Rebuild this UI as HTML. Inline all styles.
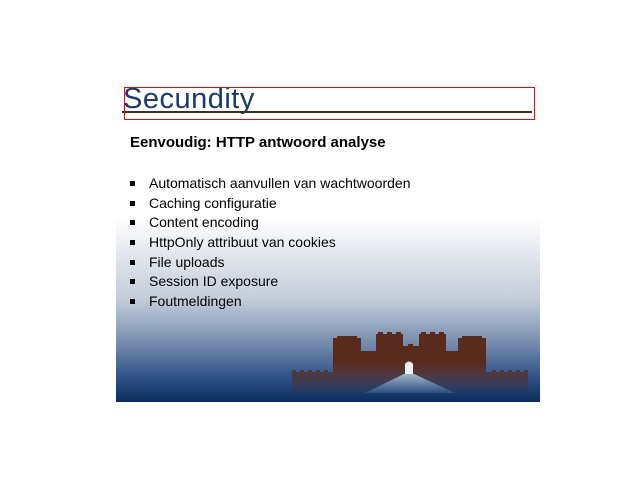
<!DOCTYPE html>
<html><head><style>
body{margin:0;width:640px;height:480px;background:#fff;position:relative;overflow:hidden;font-family:"Liberation Sans",sans-serif}
#slide{position:absolute;left:116px;top:80px;width:424px;height:322px;background:linear-gradient(to bottom,#fff 0,#fff 138px,#e6e9ef 170px,#c3ccd9 220px,#7189ab 265px,#33558a 295px,#0a2d5e 322px)}
.t{position:absolute;color:#000;white-space:nowrap}
.b{position:absolute;left:130px;width:5px;height:5px;background:#000}
</style></head><body>
<div id="slide"></div>
<div class="t" style="left:123px;top:83px;font-size:29px;color:#1b3a6b;letter-spacing:0.5px">Secundity</div>
<div style="position:absolute;left:122px;top:111px;width:410px;height:2px;background:#4a2a1e"></div>
<div style="position:absolute;left:124px;top:87px;width:409px;height:31px;border:1px solid #f00"></div>
<div class="t" style="left:130px;top:134px;font-size:15px;font-weight:bold">Eenvoudig: HTTP antwoord analyse</div>
<div class="b" style="top:181px"></div><div class="t" style="left:149px;top:175px;font-size:14px">Automatisch aanvullen van wachtwoorden</div>
<div class="b" style="top:201px"></div><div class="t" style="left:149px;top:195px;font-size:14px">Caching configuratie</div>
<div class="b" style="top:220px"></div><div class="t" style="left:149px;top:214px;font-size:14px">Content encoding</div>
<div class="b" style="top:240px"></div><div class="t" style="left:149px;top:234px;font-size:14px">HttpOnly attribuut van cookies</div>
<div class="b" style="top:260px"></div><div class="t" style="left:149px;top:254px;font-size:14px">File uploads</div>
<div class="b" style="top:279px"></div><div class="t" style="left:149px;top:273px;font-size:14px">Session ID exposure</div>
<div class="b" style="top:299px"></div><div class="t" style="left:149px;top:293px;font-size:14px">Foutmeldingen</div>
<svg style="position:absolute;left:0;top:0" width="640" height="480">
<defs>
<linearGradient id="mg" gradientUnits="userSpaceOnUse" x1="0" y1="330" x2="0" y2="396"><stop offset="0.5" stop-color="#fff"/><stop offset="1" stop-color="#000"/></linearGradient>
<mask id="m"><rect x="280" y="320" width="260" height="80" fill="url(#mg)"/></mask>
<linearGradient id="r" x1="0" y1="0" x2="0" y2="1"><stop offset="0" stop-color="#a6b6cc"/><stop offset="1" stop-color="#2a4f80"/></linearGradient>
</defs>
<g fill="#5a2a1c" mask="url(#m)">
<rect x="292" y="372" width="236" height="24"/>
<rect x="292" y="370" width="4" height="3"/><rect x="300" y="370" width="4" height="3"/><rect x="308" y="370" width="4" height="3"/><rect x="316" y="370" width="4" height="3"/><rect x="324" y="370" width="4" height="3"/>
<rect x="492" y="370" width="4" height="3"/><rect x="500" y="370" width="4" height="3"/><rect x="508" y="370" width="4" height="3"/><rect x="516" y="370" width="4" height="3"/><rect x="524" y="370" width="4" height="3"/>
<rect x="333" y="338" width="28" height="40"/><rect x="337" y="336" width="20" height="3"/>
<rect x="376" y="334" width="27" height="44"/><rect x="378" y="332" width="5" height="3"/><rect x="387" y="332" width="5" height="3"/><rect x="396" y="332" width="5" height="3"/>
<rect x="419" y="334" width="27" height="44"/><rect x="421" y="332" width="5" height="3"/><rect x="430" y="332" width="5" height="3"/><rect x="439" y="332" width="5" height="3"/>
<rect x="458" y="338" width="28" height="40"/><rect x="462" y="336" width="20" height="3"/>
<rect x="361" y="351" width="97" height="27"/><rect x="403" y="346" width="16" height="6"/><rect x="408" y="344" width="5" height="3"/>
</g>
<path fill="url(#r)" d="M404 374 L414 374 L455 393 L365 393 Z"/>
<path fill="#eef1f5" d="M405 374v-10q4-5 8 0v10z"/>
</svg>
</body></html>
